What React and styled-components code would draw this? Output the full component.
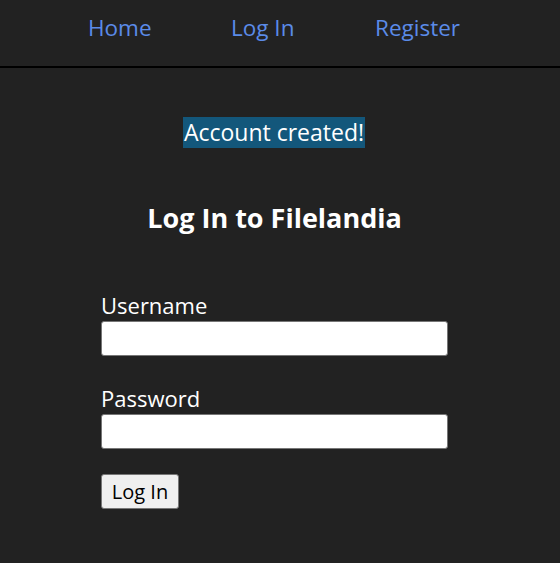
import React from "react";
import styled, { createGlobalStyle } from "styled-components";

const Global = createGlobalStyle`
  html, body { margin: 0; padding: 0; background: #222222; }
  body { font-family: "Open Sans", "Noto Sans", sans-serif; color: #ffffff; }
`;

const Nav = styled.nav`
  height: 66px;
  border-bottom: 2px solid #000;
  display: flex;
  align-items: center;
  padding-left: 88px;
`;

const NavLink = styled.a`
  color: #5b8be8;
  font-size: 22.5px;
  text-decoration: none;
  width: ${(p) => p.$w}px;
  line-height: 1;
  margin-top: -10px;
`;

const Main = styled.main`
  display: flex;
  flex-direction: column;
  align-items: center;
  padding-top: 49px;
`;

const Notice = styled.div`
  background: #13577b;
  color: #fff;
  font-size: 23px;
  line-height: 31px;
  padding: 0 1px;
  margin-left: -12px;
`;

const Title = styled.h2`
  font-size: 27px;
  font-weight: 700;
  margin: 54px 0 0;
  line-height: 32px;
  margin-left: -11px;
`;

const Form = styled.form`
  align-self: flex-start;
  margin: 57px 0 0 101px;
  width: 347px;
  display: flex;
  flex-direction: column;
`;

const Label = styled.label`
  font-size: 22px;
  line-height: 29px;
  margin-top: ${(p) => p.$top}px;
`;

const Input = styled.input`
  box-sizing: border-box;
  width: 347px;
  height: 35px;
  margin-top: 1px;
  background: #fff;
  border: 1px solid #767676;
  border-radius: 3px;
  padding: 0 6px;
  font-size: 18px;
`;

const Button = styled.button`
  align-self: flex-start;
  margin-top: 25px;
  box-sizing: border-box;
  width: 78px;
  height: 35px;
  background: #efefef;
  border: 1px solid #767676;
  border-radius: 3px;
  font-family: "Open Sans", "Noto Sans", sans-serif;
  font-size: 20px;
  color: #000;
  padding: 0;
`;

export default function App() {
  return (
    <>
      <Global />
      <Nav>
        <NavLink href="#" $w={143}>Home</NavLink>
        <NavLink href="#" $w={144}>Log In</NavLink>
        <NavLink href="#" $w={100}>Register</NavLink>
      </Nav>
      <Main>
        <Notice>Account created!</Notice>
        <Title>Log In to Filelandia</Title>
        <Form onSubmit={(e) => e.preventDefault()}>
          <Label $top={0} htmlFor="u">Username</Label>
          <Input id="u" type="text" />
          <Label $top={28} htmlFor="p">Password</Label>
          <Input id="p" type="password" />
          <Button type="submit">Log In</Button>
        </Form>
      </Main>
    </>
  );
}
